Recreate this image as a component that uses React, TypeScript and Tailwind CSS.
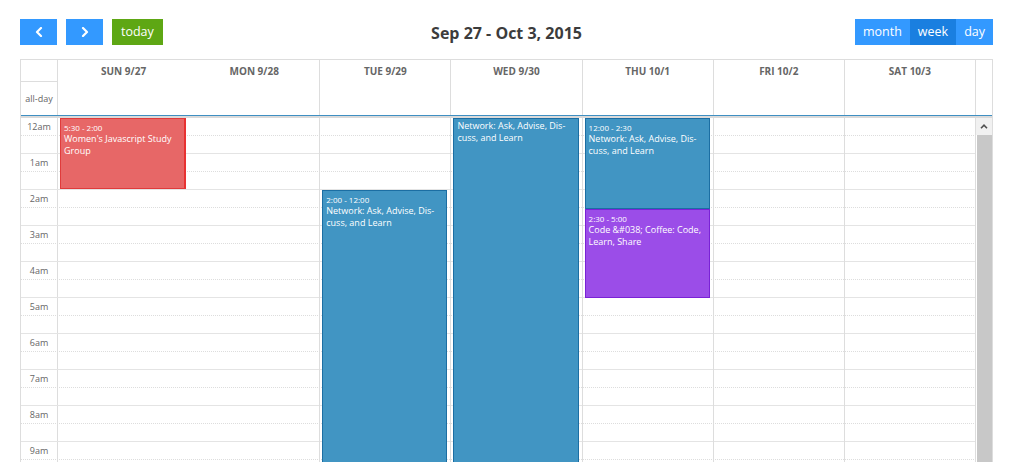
import React from 'react';

type CalEvent = {
  day: number;
  top: number;
  height: number;
  time?: string;
  title: string;
  color: 'red' | 'blue' | 'purple';
};

const days = ['SUN 9/27', 'MON 9/28', 'TUE 9/29', 'WED 9/30', 'THU 10/1', 'FRI 10/2', 'SAT 10/3'];

// only the hours that fit in the window
const hours = ['12am', '1am', '2am', '3am', '4am', '5am', '6am', '7am', '8am', '9am'];

const events: CalEvent[] = [
  { day: 0, top: 0, height: 71, time: '5:30 - 2:00', title: "Women's Javascript Study Group", color: 'red' },
  { day: 2, top: 72, height: 792, time: '2:00 - 12:00', title: 'Network: Ask, Advise, Dis\u00ADcuss, and Learn', color: 'blue' },
  { day: 3, top: 0, height: 864, title: 'Network: Ask, Advise, Dis\u00ADcuss, and Learn', color: 'blue' },
  { day: 4, top: 0, height: 91, time: '12:00 - 2:30', title: 'Network: Ask, Advise, Dis\u00ADcuss, and Learn', color: 'blue' },
  { day: 4, top: 91, height: 89, time: '2:30 - 5:00', title: 'Code &#038; Coffee: Code, Learn, Share', color: 'purple' },
];

const colorClass = {
  red: 'bg-[#e76767] border border-[#e03b3b] border-r-2 border-r-[#e83232]',
  blue: 'bg-[#4195c3] border border-[#1b6ea3]',
  purple: 'bg-[#9b4de8] border border-[#7a22d6]',
};

const Chevron = ({ dir }: { dir: 'left' | 'right' }) => (
  <svg width="8" height="10" viewBox="0 0 8 10" fill="none">
    <path
      d={dir === 'left' ? 'M6 1 L2 5 L6 9' : 'M2 1 L6 5 L2 9'}
      stroke="white"
      strokeWidth="2.2"
      strokeLinecap="round"
      strokeLinejoin="round"
    />
  </svg>
);

const App: React.FC = () => {
  return (
    <div className="h-[462px] w-[1009px] overflow-hidden bg-white font-['Open_Sans',sans-serif] text-[#333]">
      {/* toolbar */}
      <div className="ml-5 flex h-[59px] w-[973px] items-start pt-[19px]">
        <div className="flex flex-1 gap-[9px]">
          <button className="flex h-[26px] w-[37px] items-center justify-center bg-[#3399ff]">
            <Chevron dir="left" />
          </button>
          <button className="flex h-[26px] w-[37px] items-center justify-center bg-[#3399ff]">
            <Chevron dir="right" />
          </button>
          <button className="h-[26px] bg-[#5ea714] px-[9px] text-[12.5px] text-white">today</button>
        </div>
        <h2 className="pt-[1px] text-[16px] font-bold leading-[26px] text-[#3c3c3c]">Sep 27 - Oct 3, 2015</h2>
        <div className="flex flex-1 justify-end">
          <button className="h-[26px] bg-[#3399ff] px-2 text-[12.5px] text-white">month</button>
          <button className="h-[26px] bg-[#1a7fe0] px-2 text-[12.5px] text-white">week</button>
          <button className="h-[26px] bg-[#3399ff] px-2 text-[12.5px] text-white">day</button>
        </div>
      </div>

      {/* calendar table */}
      <div className="ml-5 w-[973px] border-x border-t border-[#dddddd]">
        {/* header */}
        <div className="flex h-[55px]">
          <div className="flex w-[37px] flex-col border-r border-[#dddddd]">
            <div className="h-[22px] border-b border-[#dddddd]" />
            <div className="flex flex-1 items-center justify-center text-[9px] text-[#666]">all-day</div>
          </div>
          <div className="grid w-[918px] grid-cols-7">
            {days.map((d, i) => (
              <div
                key={d}
                className={`${i === 0 ? '' : 'border-r border-[#dddddd]'} pt-[5px] text-center text-[10px] font-bold leading-[12px] text-[#666]`}
              >
                {d}
              </div>
            ))}
          </div>
          <div className="w-[16px]" />
        </div>
        <div className="h-[3px] border-t border-[#3f8fc2] bg-[#dadada]" />

        {/* body */}
        <div className="flex h-[344px] overflow-hidden">
          <div className="relative h-[360px] w-[955px]">
            {hours.map((h) => (
              <React.Fragment key={h}>
                <div className="flex h-[18px] border-b border-dotted border-[#dddddd]">
                  <div className="flex w-[37px] items-center justify-center border-r border-[#dddddd] text-[9px] text-[#666]">
                    {h}
                  </div>
                </div>
                <div className="flex h-[18px] border-b border-[#e4e4e4]">
                  <div className="w-[37px] border-r border-[#dddddd]" />
                </div>
              </React.Fragment>
            ))}
            <div className="absolute inset-y-0 left-[37px] grid w-[918px] grid-cols-7">
              {days.map((d, i) => (
                <div key={d} className={`relative ${i === 0 ? '' : 'border-r border-[#dddddd]'}`}>
                  {events
                    .filter((e) => e.day === i)
                    .map((e) => (
                      <div
                        key={e.title + e.top}
                        className={`absolute left-[2px] right-[3px] overflow-hidden px-[3px] text-white ${colorClass[e.color]} ${e.time ? 'pt-[3px]' : 'pt-[1px]'}`}
                        style={{ top: e.top, height: e.height }}
                      >
                        {e.time && <div className="text-[8px] leading-[11px]">{e.time}</div>}
                        <div className="text-[9px] leading-[12px]">{e.title}</div>
                      </div>
                    ))}
                </div>
              ))}
            </div>
          </div>
          {/* scrollbar */}
          <div className="flex w-[16px] flex-col">
            <div className="flex h-[17px] items-center justify-center bg-[#f1f1f1]">
              <svg width="8" height="5" viewBox="0 0 8 5" fill="none">
                <path d="M1 4.2 L4 1.2 L7 4.2" stroke="#505050" strokeWidth="1.6" />
              </svg>
            </div>
            <div className="ml-[1px] flex-1 bg-[#c8c8c8]" />
          </div>
        </div>
      </div>
    </div>
  );
};

export default App;
